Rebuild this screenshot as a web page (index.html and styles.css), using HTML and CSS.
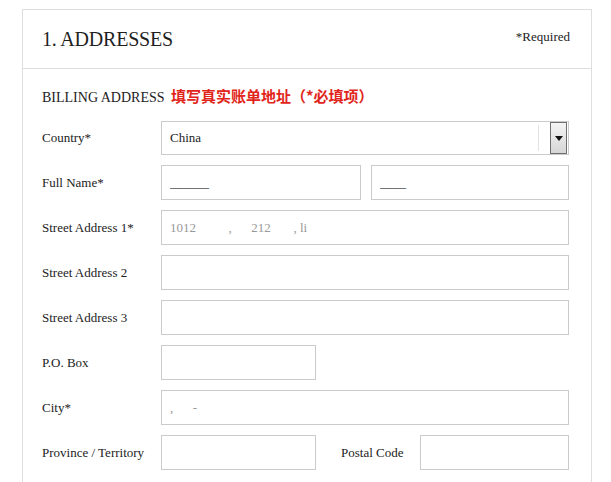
FILE: index.html
```html
<!DOCTYPE html>
<html>

<head>
    <title>Checkout - Addresses</title>
    <link rel="stylesheet" href="styles.css">
</head>

<body>

    <div class="card">
        <div class="card-head">
            <h2>1. ADDRESSES</h2>
            <span class="required">*Required</span>
        </div>

        <div class="card-body">
            <h3>BILLING ADDRESS <span class="note">填写真实账单地址（*必填项）</span></h3>

            <div class="row">
                <label>Country*</label>
                <div class="select">
                    <span class="select-value">China</span>
                    <span class="select-sep"></span>
                    <span class="select-btn">
                        <svg width="8" height="5" viewBox="0 0 8 5"><path d="M0 0H8L4 5Z" fill="#111"/></svg>
                    </span>
                </div>
            </div>

            <div class="row">
                <label>Full Name*</label>
                <input type="text" class="field half" value="______">
                <input type="text" class="field half second" value="____">
            </div>

            <div class="row">
                <label>Street Address 1*</label>
                <input type="text" class="field faded" value="1012          ,      212       , li">
            </div>

            <div class="row">
                <label>Street Address 2</label>
                <input type="text" class="field">
            </div>

            <div class="row">
                <label>Street Address 3</label>
                <input type="text" class="field">
            </div>

            <div class="row">
                <label>P.O. Box</label>
                <input type="text" class="field short">
            </div>

            <div class="row">
                <label>City*</label>
                <input type="text" class="field faded" value=",      -">
            </div>

            <div class="row">
                <label>Province / Territory</label>
                <input type="text" class="field short">
                <label class="inline">Postal Code</label>
                <input type="text" class="field postal">
            </div>
        </div>
    </div>

</body>

</html>
```

FILE: styles.css
```css
body {
    margin: 0;
    background: #fff;
    font-family: 'Liberation Serif', 'Times New Roman', serif;
    color: #222;
}

.card {
    width: 568px;
    margin: 9px 0 0 22px;
    border: 1px solid #dedede;
    border-bottom: none;
    height: 480px;
}

.card-head {
    height: 58px;
    display: flex;
    align-items: center;
    justify-content: space-between;
    padding: 0 21px 0 19px;
    border-bottom: 1px solid #dedede;
}

.card-head h2 {
    margin: 0;
    font-weight: normal;
    font-size: 20px;
    color: #1f1f1f;
    letter-spacing: -0.2px;
}

.required {
    font-size: 13px;
    position: relative;
    top: -2px;
}

.card-body {
    padding: 17px 21px 0 19px;
}

.card-body h3 {
    margin: 0 0 13px;
    font-weight: normal;
    font-size: 14px;
    line-height: 20px;
    color: #222;
}

.note {
    font-family: 'Noto Sans CJK SC', sans-serif;
    font-weight: bold;
    font-size: 15px;
    color: #e1251b;
    margin-left: 3px;
}

.row {
    display: flex;
    align-items: center;
    margin-bottom: 10px;
}

.row label {
    width: 119px;
    font-size: 13px;
    flex-shrink: 0;
}

.row label.inline {
    width: 79px;
    margin-left: 25px;
}

.field {
    box-sizing: border-box;
    height: 35px;
    width: 408px;
    border: 1px solid #cbcbcb;
    padding: 0 8px;
    font-family: 'Liberation Serif', serif;
    font-size: 13px;
    color: #333;
    background: #fff;
}

.field.half {
    width: 200px;
}

.field.second {
    width: 198px;
    margin-left: 10px;
}

.field.faded {
    color: #999;
}

.field.short {
    width: 155px;
}

.field.postal {
    width: 149px;
}

.select {
    box-sizing: border-box;
    width: 408px;
    height: 34px;
    border: 1px solid #cbcbcb;
    display: flex;
    align-items: center;
    font-size: 13px;
}

.select-value {
    flex: 1;
    padding-left: 8px;
}

.select-sep {
    width: 1px;
    height: 26px;
    background: #e3e3e3;
    margin-right: 11px;
}

.select-btn {
    box-sizing: border-box;
    width: 17px;
    height: 32px;
    margin-right: 1px;
    border: 1px solid #6f6f6f;
    background: linear-gradient(#f4f4f4, #d6d6d6);
    display: flex;
    align-items: center;
    justify-content: center;
}
```
